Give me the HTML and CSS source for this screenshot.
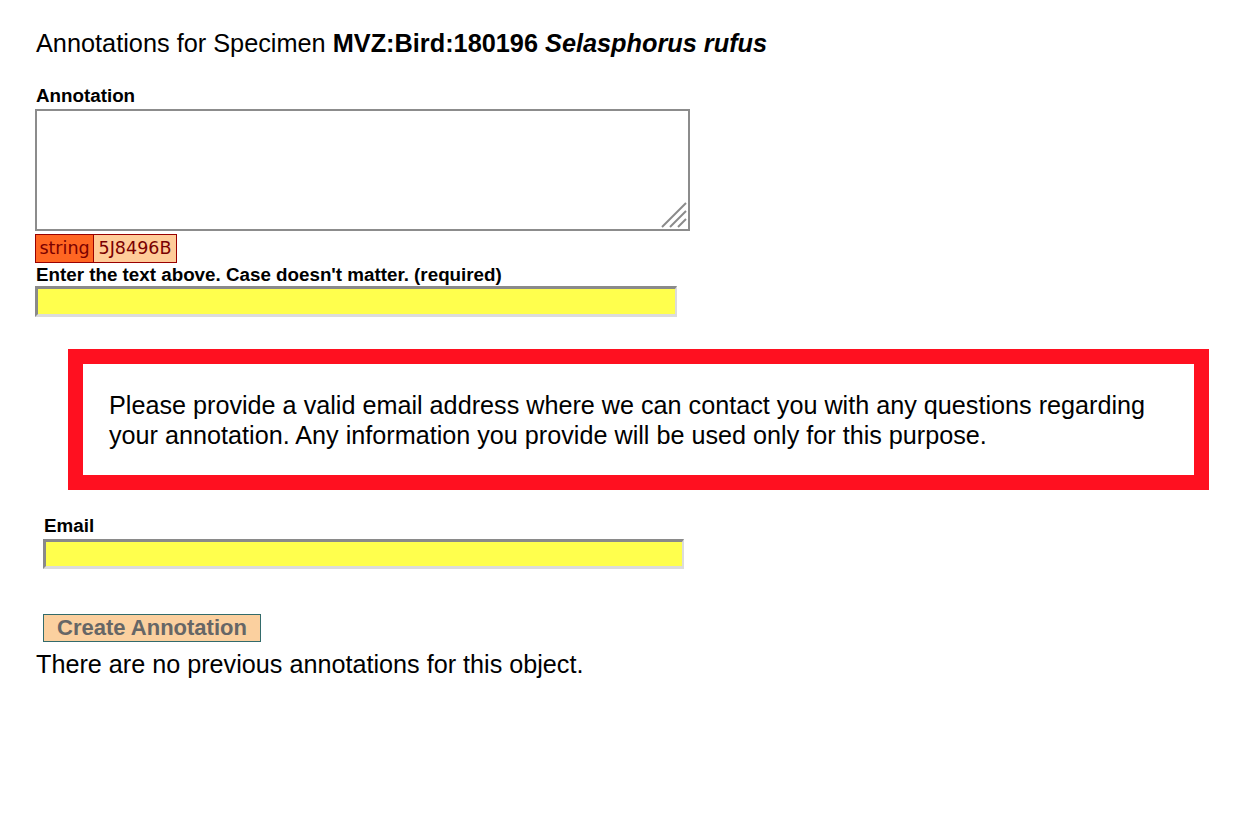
FILE: index.html
```html
<!DOCTYPE html>
<html>
<head>
<meta charset="utf-8">
<title>Annotations</title>
<link rel="stylesheet" href="styles.css">
</head>
<body>
<div class="page">
  <div class="title">Annotations for Specimen <strong>MVZ:Bird:180196</strong> <strong><em>Selasphorus rufus</em></strong></div>

  <label class="label label-annotation" for="annotation">Annotation</label>
  <div class="textarea-wrap">
    <textarea id="annotation" class="textarea"></textarea>
    <svg class="grip" width="26" height="26" viewBox="0 0 26 26">
      <line x1="25" y1="1" x2="1" y2="25" stroke="#8a8a8a" stroke-width="2"/>
      <line x1="25" y1="9" x2="9" y2="25" stroke="#8a8a8a" stroke-width="2"/>
      <line x1="25" y1="17" x2="17" y2="25" stroke="#8a8a8a" stroke-width="2"/>
    </svg>
  </div>

  <div class="captcha">
    <span class="cap-word">string</span><span class="cap-code">5J8496B</span>
  </div>
  <label class="label label-captcha" for="captcha">Enter the text above. Case doesn't matter. (required)</label>
  <input id="captcha" class="field field-captcha" type="text">

  <div class="notice">
    <p class="notice-text">Please provide a valid email address where we can contact you with any questions regarding your annotation. Any information you provide will be used only for this purpose.</p>
  </div>

  <div class="email-block">
    <label class="label label-email" for="email">Email</label>
    <input id="email" class="field field-email" type="text">
    <button class="btn" type="button">Create Annotation</button>
  </div>

  <div class="none-text">There are no previous annotations for this object.</div>
</div>
</body>
</html>
```

FILE: styles.css
```css
html, body {
  margin: 0;
  padding: 0;
  background: #ffffff;
}

body {
  font-family: "Liberation Sans", Arial, Helvetica, sans-serif;
  color: #000;
}

.page {
  padding: 28px 29px 0 35px;
}

.title {
  font-size: 25.3px;
  line-height: 30px;
  padding-left: 1px;
}

.title strong {
  font-weight: bold;
}

.label {
  display: block;
  font-weight: bold;
  font-size: 18.8px;
  line-height: 22px;
  padding-left: 1px;
}

.label-annotation {
  margin-top: 27px;
}

.textarea-wrap {
  position: relative;
  width: 655px;
  height: 122px;
  margin-top: 2px;
}

.textarea {
  display: block;
  box-sizing: border-box;
  width: 655px;
  height: 122px;
  margin: 0;
  border: 2px solid #8c8c8c;
  background: #fff;
  resize: none;
  outline: none;
  padding: 2px;
}

.grip {
  position: absolute;
  right: 3px;
  bottom: 3px;
}

.captcha {
  display: flex;
  margin-top: 3px;
  height: 29px;
}

.cap-word,
.cap-code {
  font-family: "DejaVu Sans", Verdana, sans-serif;
  font-size: 17.5px;
  line-height: 27px;
  color: #7a0000;
  border: 1px solid #990000;
  padding: 0 3px;
}

.cap-word {
  background: #ff6622;
  width: 51px;
  text-align: center;
}

.cap-code {
  background: #ffcc99;
  border-left: none;
  width: 76px;
  text-align: center;
}

.label-captcha {
  margin-top: 1px;
}

.field {
  display: block;
  box-sizing: border-box;
  margin: 0;
  padding: 0 4px;
  background: #ffff4d;
  border-style: solid;
  border-width: 3px 2px 3px 3px;
  border-color: #8a8a8a #dcdcdc #dcdcdc #8a8a8a;
  outline: none;
}

.field-captcha {
  width: 642px;
  height: 31px;
}

.notice {
  margin: 32px 0 0 33px;
  border: 15px solid #ff1020;
  background: #fff;
  padding: 26px 24px 25px 24px;
}

.notice-text {
  margin: 0;
  font-size: 25.2px;
  line-height: 30px;
  padding-left: 2px;
}

.email-block {
  padding-left: 8px;
}

.label-email {
  margin-top: 25px;
}

.field-email {
  margin-top: 2px;
  width: 641px;
  height: 30px;
}

.btn {
  display: block;
  margin-top: 45px;
  box-sizing: border-box;
  width: 218px;
  height: 28px;
  padding: 0;
  border: 1px solid #336b6b;
  background: #fbd09f;
  color: #666666;
  font-family: "Liberation Sans", Arial, Helvetica, sans-serif;
  font-weight: bold;
  font-size: 22px;
  line-height: 26px;
  text-align: center;
}

.none-text {
  margin-top: 7px;
  font-size: 25.2px;
  line-height: 30px;
  padding-left: 1px;
}
```
